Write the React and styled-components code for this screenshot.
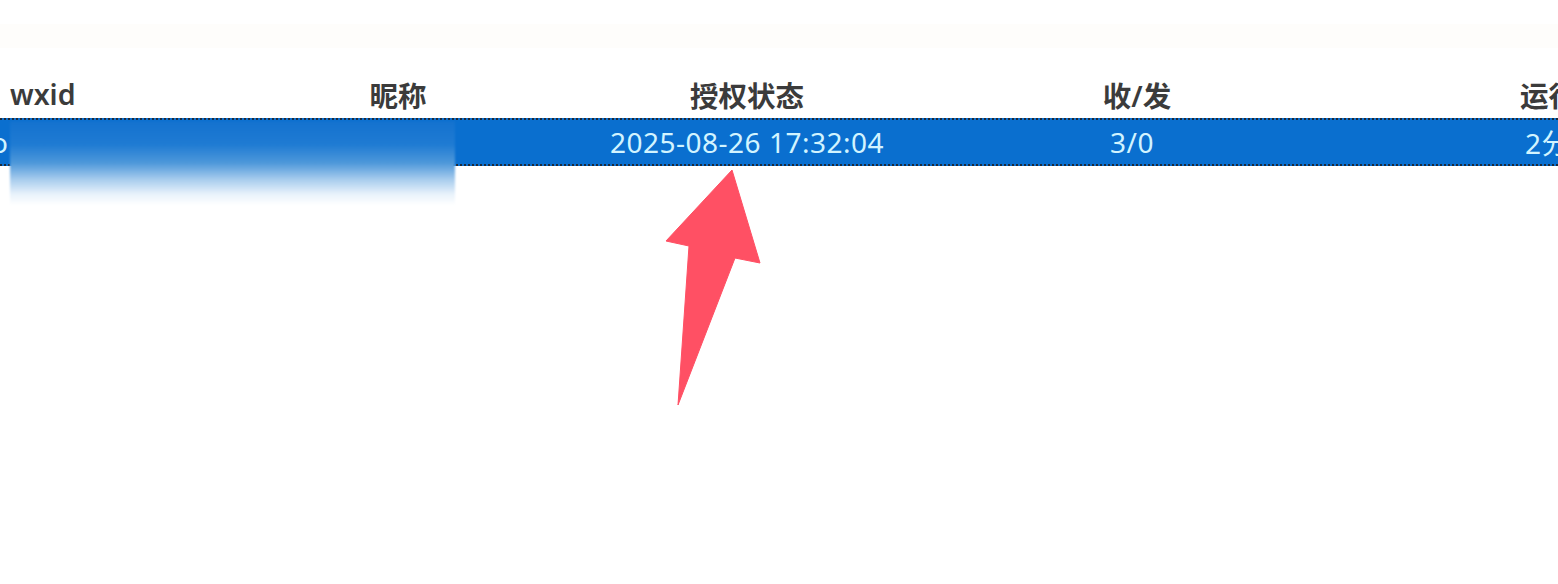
import React from 'react';
import styled, { createGlobalStyle } from 'styled-components';

const GlobalStyle = createGlobalStyle`
  html, body {
    margin: 0;
    padding: 0;
    background: #ffffff;
  }
  body {
    font-family: "Noto Sans", "Noto Sans CJK SC", sans-serif;
    overflow: hidden;
  }
`;

const Page = styled.div`
  position: relative;
  width: 1558px;
  height: 584px;
  overflow: hidden;
  background: #ffffff;
`;

const TopBand = styled.div`
  height: 24px;
  margin-top: 24px;
  margin-bottom: 22px;
  background: #fefdfb;
`;

const columns = '340px 116px 582px 188px 1fr';

const HeaderRow = styled.div`
  display: grid;
  grid-template-columns: ${columns};
  height: 48px;
  align-items: center;
  white-space: nowrap;
`;

const HeaderCell = styled.div`
  font-size: 28.5px;
  font-weight: 600;
  color: #3b3b3b;
  text-align: ${({ align }) => align || 'center'};
  padding-left: ${({ pad }) => pad || 0}px;
  overflow: hidden;
`;

const SelectedRow = styled.div`
  display: grid;
  grid-template-columns: ${columns};
  height: 44px;
  align-items: center;
  background: #0a6fcf;
  border-top: 2px dotted #1d2a3a;
  border-bottom: 2px dotted #1d2a3a;
  white-space: nowrap;
`;

const Cell = styled.div`
  font-size: 28px;
  color: #d2f4ff;
  letter-spacing: 0.5px;
  text-align: ${({ align }) => align || 'center'};
  padding-left: ${({ pad }) => pad || 0}px;
  margin-left: ${({ shift }) => shift || 0}px;
  overflow: hidden;
`;

const Redaction = styled.div`
  position: absolute;
  left: 10px;
  top: 121px;
  width: 445px;
  height: 84px;
  background: linear-gradient(
    to bottom,
    #1472cf 0%,
    #1f7bd3 28%,
    #4e98da 50%,
    #a9cdee 70%,
    #e8f2fb 87%,
    #ffffff 100%
  );
  filter: blur(1px);
`;

const ArrowSvg = styled.svg`
  position: absolute;
  left: 660px;
  top: 165px;
`;

const Arrow = () => (
  <ArrowSvg width="110" height="245" viewBox="0 0 110 245">
    <polygon
      points="72,5 6,76 29,81 18,240 75,93 100,98"
      fill="#ff5064"
      stroke="#ff5064"
      strokeWidth="1"
      strokeLinejoin="round"
    />
  </ArrowSvg>
);

export default function App() {
  return (
    <Page>
      <GlobalStyle />
      <TopBand />
      <HeaderRow>
        <HeaderCell align="left" pad={10}>wxid</HeaderCell>
        <HeaderCell>昵称</HeaderCell>
        <HeaderCell>授权状态</HeaderCell>
        <HeaderCell pad={10}>收/发</HeaderCell>
        <HeaderCell align="left" pad={294}>运行时长</HeaderCell>
      </HeaderRow>
      <SelectedRow>
        <Cell align="left" shift={-9}>o</Cell>
        <Cell />
        <Cell>2025-08-26 17:32:04</Cell>
        <Cell>3/0</Cell>
        <Cell align="left" pad={299}>2分钟</Cell>
      </SelectedRow>
      <Redaction />
      <Arrow />
    </Page>
  );
}
